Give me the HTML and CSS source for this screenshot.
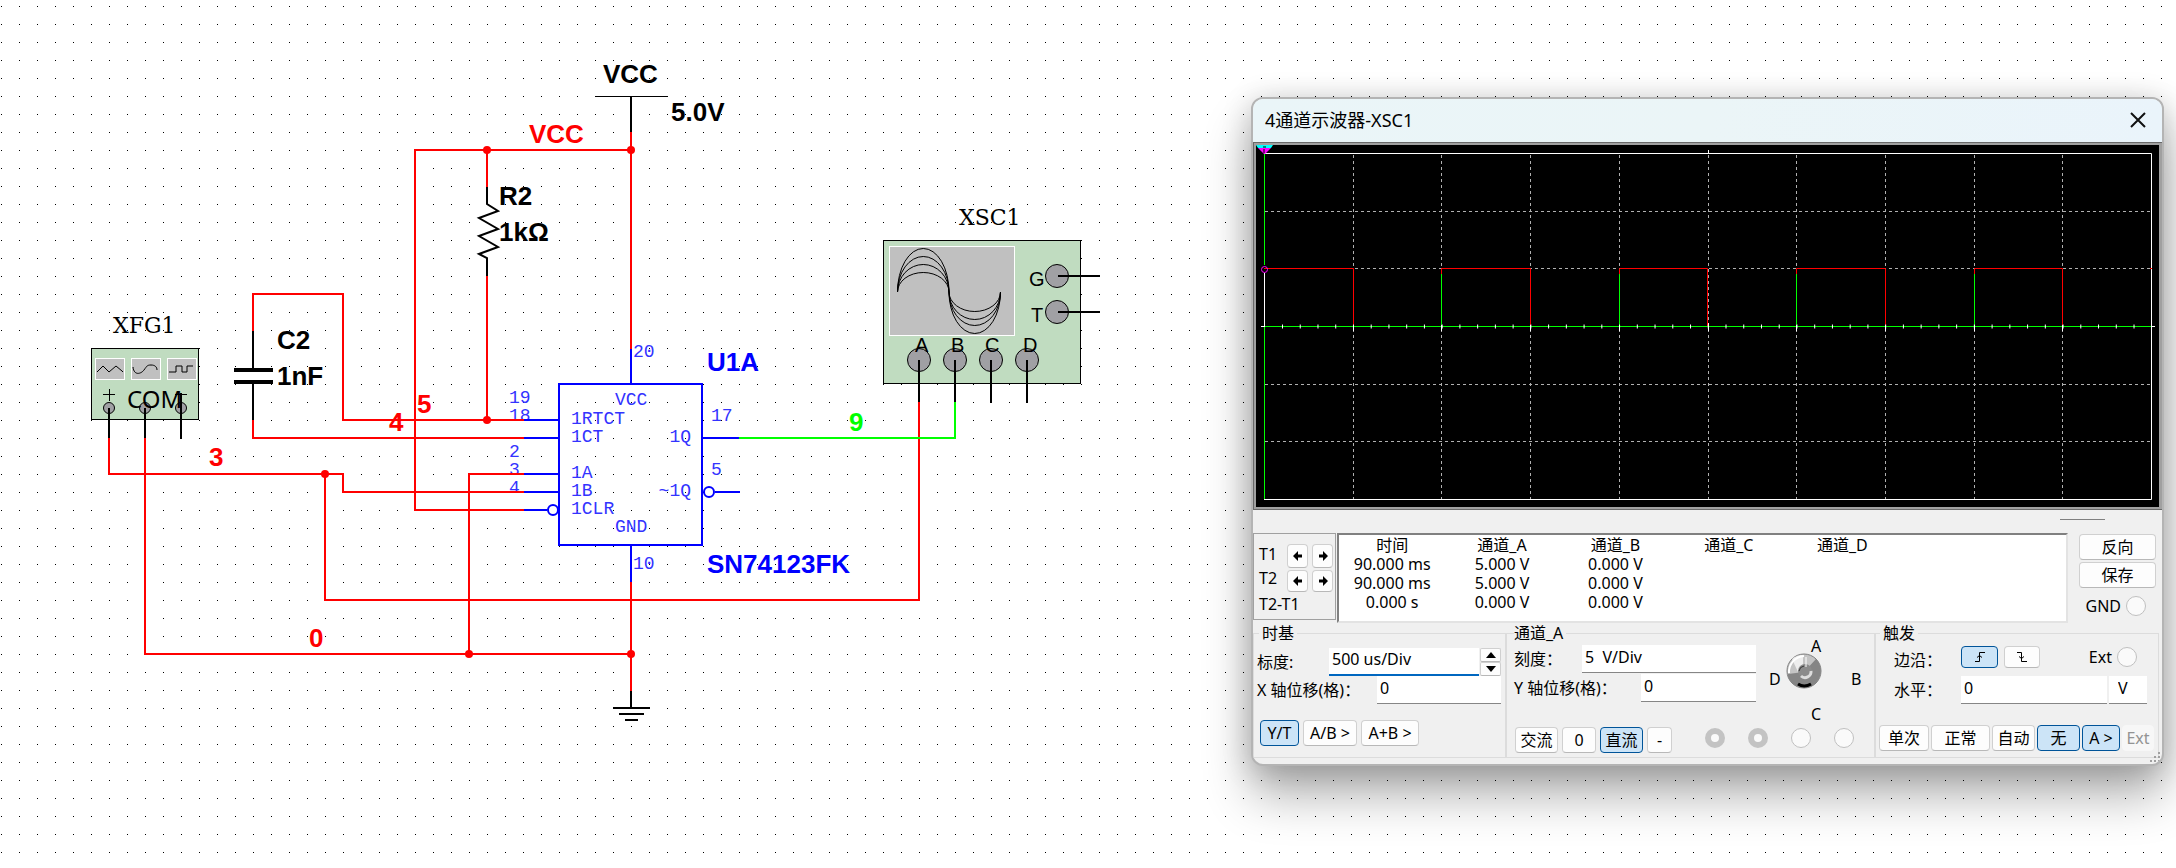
FILE: index.html
```html
<!DOCTYPE html>
<html lang="zh-CN">
<head>
<meta charset="utf-8">
<title>4通道示波器-XSC1</title>
<link rel="stylesheet" href="styles.css">
</head>
<body>
<main class="workspace">
<svg class="schematic" width="1200" height="800" viewBox="0 0 1200 800" role="img" aria-label="SN74123FK circuit">
  <g class="device">
    <rect x="91.5" y="348.5" width="107" height="71"/>
    <rect x="883.500" y="240.5" width="197" height="143"/>
  </g>
  <g class="screen">
    <rect x="95.5" y="358.5" width="29" height="21"/>
    <rect x="131.500" y="358.5" width="29" height="21"/>
    <rect x="167.5" y="358.5" width="29" height="21"/>
    <rect x="889.500" y="246.500" width="125" height="89"/>
  </g>
  <g class="thin">
    <path d="M97 372l6-6 6 6 7-6 6 5 1 1"/>
    <path d="M133 367c1 9 8 7 11 3s3-5 7-5 6 2 6 5"/>
    <path d="M169 372h7v-6h6v6h5v-6h6"/>
    <path d="M103 394.500h12M109.500 389v12M175 394.500h12"/>
    <path d="M897.500 292A25.750 43.500 0 0 1 949 292A25.750 41.500 0 0 0 1000.500 292"/>
    <path d="M897.500 292A25.750 35.500 0 0 1 949 292A25.750 33.500 0 0 0 1000.500 292"/>
    <path d="M897.500 292A25.750 27.500 0 0 1 949 292A25.750 27.500 0 0 0 1000.500 292"/>
    <path d="M897.500 292A25.750 19.500 0 0 1 949 292A25.750 19.500 0 0 0 1000.500 292"/>
  </g>
  <g class="terminal">
    <circle cx="109" cy="408" r="5.500"/><circle cx="145" cy="408" r="5.500"/><circle cx="181" cy="408" r="5.500"/>
    <circle cx="919" cy="360" r="11.500"/><circle cx="955" cy="360" r="11.500"/><circle cx="991" cy="360" r="11.500"/><circle cx="1027" cy="360" r="11.500"/>
    <circle cx="1057" cy="276" r="11.500"/><circle cx="1057" cy="312" r="11.500"/>
  </g>
  <g class="pin-no">
    <text x="633" y="357">20</text><text x="509" y="403">19</text><text x="509" y="421">18</text>
    <text x="509" y="457">2</text><text x="509" y="475">3</text><text x="509" y="493">4</text>
    <text x="711" y="421">17</text><text x="711" y="475">5</text><text x="633" y="569">10</text>
    <text x="615" y="405">VCC</text><text x="571" y="424">1RTCT</text><text x="571" y="442">1CT</text>
    <text x="571" y="478">1A</text><text x="571" y="496">1B</text><text x="571" y="514">1CLR</text>
    <text x="615" y="532">GND</text>
    <text x="691" y="442" text-anchor="end">1Q</text><text x="691" y="496" text-anchor="end">~1Q</text>
  </g>
  <g class="wire red">
    <path d="M631 132V349M631 150H415V510H524M487 150V187M487 276V420"/>
    <path d="M253 331V294H343V420H524M253 420V438H524"/>
    <path d="M109 438V474H343V492H524M325 474V600H919V402"/>
    <path d="M145 438V654H631M469 654V474H524M631 582V691"/>
  </g>
  <path class="wire green" d="M739 438H955V402"/>
  <g class="wire blue">
    <rect x="559" y="384" width="143" height="161"/>
    <path d="M631 349V384M631 545V582M524 420H559M524 438H559M524 474H559M524 492H559M524 510H547M703 438H739M715 492H740"/>
    <circle cx="553" cy="510" r="5"/><circle cx="709" cy="492" r="5"/>
  </g>
  <g class="wire black">
    <path d="M631 97V132M487 187V204L498 211L479 218L498 229L479 236L498 247L479 254L487 258V276"/>
    <path d="M253 331V369M253 383V420M109 408V438M145 408V438M181 393V439"/>
    <path d="M919 360V402M955 360V402M991 360V403M1027 360V403M1058 276H1100M1058 312H1100"/>
    <path d="M631 691V708M613 708H650M619 714H644M625 720H638"/>
  </g>
  <path class="rail" d="M595 96.500H668"/>
  <path class="plate" d="M234 370H273M234 382H273"/>
  <g class="joint">
    <circle cx="487" cy="150" r="4"/><circle cx="631" cy="150" r="4"/><circle cx="487" cy="420" r="4"/>
    <circle cx="325" cy="474" r="4"/><circle cx="469" cy="654" r="4"/><circle cx="631" cy="654" r="4"/>
  </g>
  <g class="label">
    <text x="603" y="83">VCC</text><text x="671" y="121">5.0V</text>
    <text x="499" y="205">R2</text><text x="499" y="241">1kΩ</text>
    <text x="277" y="349">C2</text><text x="277" y="385">1nF</text>
  </g>
  <g class="label net">
    <text x="529" y="143">VCC</text><text x="209" y="466">3</text><text x="389" y="431">4</text>
    <text x="417" y="413">5</text><text x="309" y="647">0</text>
  </g>
  <text class="label out" x="849" y="431">9</text>
  <g class="label part"><text x="707" y="371">U1A</text><text x="707" y="573">SN74123FK</text></g>
  <g class="instrument"><text x="113" y="333">XFG1</text><text x="959" y="225">XSC1</text></g>
  <text class="com" x="127" y="408">COM</text>
  <g class="port">
    <text x="1029" y="286">G</text><text x="1031" y="322">T</text>
    <text x="915" y="352">A</text><text x="951" y="352">B</text><text x="985" y="352">C</text><text x="1023" y="352">D</text>
  </g>
</svg>

<section class="window" aria-label="4通道示波器-XSC1">
  <header class="titlebar">
    <h1 class="title">4通道示波器-XSC1</h1>
    <button class="close" aria-label="关闭"><svg width="16" height="16" viewBox="0 0 16 16"><path d="M1 1L15 15M15 1L1 15"/></svg></button>
  </header>

  <div class="plot-frame">
    <svg class="plot" viewBox="0 0 903 362" preserveAspectRatio="none" role="img" aria-label="波形">
      <path class="grid-v" d="M97.500 10V354M185.500 10V354M274.500 10V354M363.500 10V354M452.500 10V354M540.500 10V354M629.500 10V354M718.500 10V354M806.500 10V354"/>
      <path class="grid-h" d="M9 66.500H895M9 123.500H895M9 239.500H895M9 296.500H895"/>
      <path class="frame" d="M8 8.500H895.500V354.500H8M452.500 5V9M5 181.500H9M895 181.500H899"/>
      <path class="trace-a" d="M8 123.500H97.500V181M185.500 181V123.500H274.500V181M363.500 181V123.500H451.500V181M540.500 181V123.500H629.500V181M718.500 181V123.500H806.500V181M894 123.500H896"/>
      <path class="trace-b" d="M8.500 8V120M8.500 181V354M8 181.500H895M185.500 129V181M363.500 129V181M540.500 129V181M718.500 129V181"/>
      <path class="frame" d="M8.500 128V182"/>
      <path class="ticks" d="M26 181.500H896"/>
      <path class="frame" d="M97.500 180V186M185.500 180V186M274.500 180V186M363.500 180V186M452.500 178V186M540.500 180V186M629.500 180V186M718.500 180V186M806.500 180V186"/>
      <path class="cursor-1" d="M0 0H17L15 3H2Z"/>
      <path class="cursor-2" d="M2 3H15L9 9H8Z"/>
      <path class="cursor-3" d="M7 2h3M7 5h2M7 7h2"/>
      <circle class="cursor-ring" cx="8.500" cy="124.500" r="3"/>
    </svg>
  </div>

  <div class="splitter"><span class="grip"></span></div>

  <div class="readings">
    <div class="cursors">
      <span>T1</span><button class="btn" aria-label="T1 左移"><svg width="10" height="10" viewBox="0 0 10 10"><path d="M0 5L5 0V3.500H9V6.500H5V10Z"/></svg></button><button class="btn" aria-label="T1 右移"><svg width="10" height="10" viewBox="0 0 10 10"><path d="M10 5L5 0V3.500H1V6.500H5V10Z"/></svg></button>
      <span class="second">T2</span><button class="btn" aria-label="T2 左移"><svg width="10" height="10" viewBox="0 0 10 10"><path d="M0 5L5 0V3.500H9V6.500H5V10Z"/></svg></button><button class="btn" aria-label="T2 右移"><svg width="10" height="10" viewBox="0 0 10 10"><path d="M10 5L5 0V3.500H1V6.500H5V10Z"/></svg></button>
      <span class="delta">T2-T1</span>
    </div>
    <div class="values">
      <table>
        <thead><tr><th>时间</th><th>通道_A</th><th>通道_B</th><th>通道_C</th><th>通道_D</th></tr></thead>
        <tbody>
          <tr><td>90.000 ms</td><td>5.000 V</td><td>0.000 V</td><td></td><td></td></tr>
          <tr><td>90.000 ms</td><td>5.000 V</td><td>0.000 V</td><td></td><td></td></tr>
          <tr><td>0.000 s</td><td>0.000 V</td><td>0.000 V</td><td></td><td></td></tr>
        </tbody>
      </table>
    </div>
    <div class="side">
      <button class="btn">反向</button>
      <button class="btn">保存</button>
      <label class="radio-label">GND<input class="radio" type="radio" name="gnd"></label>
    </div>
  </div>

  <div class="groups">
    <fieldset class="group timebase">
      <legend>时基</legend>
      <div class="row"><label for="scale">标度:</label><input class="field active" id="scale" value="500 us/Div">
        <span class="spin"><button class="btn" aria-label="增加"><svg width="10" height="6" viewBox="0 0 10 6"><path d="M0 6L5 0L10 6Z"/></svg></button><button class="btn" aria-label="减少"><svg width="10" height="6" viewBox="0 0 10 6"><path d="M0 0L5 6L10 0Z"/></svg></button></span></div>
      <div class="row"><label for="xpos">X 轴位移(格)：</label><input class="field short" id="xpos" value="0"></div>
      <div class="buttons"><button class="btn on w39">Y/T</button><button class="btn w54">A/B &gt;</button><button class="btn w58">A+B &gt;</button></div>
    </fieldset>

    <fieldset class="group channel">
      <legend>通道_A</legend>
      <div class="channel-main">
        <div class="row"><label for="vscale">刻度：</label><input class="field wide" id="vscale" value="5  V/Div"></div>
        <div class="row"><label for="ypos">Y 轴位移(格)：</label><input class="field mid" id="ypos" value="0"></div>
        <div class="buttons"><button class="btn w43">交流</button><button class="btn w34">0</button><button class="btn on w43">直流</button><button class="btn w25">-</button></div>
      </div>
      <div class="channel-pick">
        <svg class="dial" width="96" height="96" viewBox="0 -6 96 96" role="img" aria-label="通道选择">
          <circle cx="36" cy="33" r="17" fill="#c4c4c4" stroke="#808080"/>
          <path d="M20 36L36 34L48 21A17 17 0 1 1 20 39Z" fill="#858585"/>
          <path d="M24 21A17 17 0 0 1 35 17V30L30 34Z" fill="#eee"/>
          <path d="M21 35A16 16 0 0 1 36 18" fill="none" stroke="#fff" stroke-width="2"/>
          <circle cx="37" cy="33" r="7" fill="#8b8b8b"/>
          <path d="M43 33A6 6 0 0 1 33 38" fill="none" stroke="#ddd" stroke-width="3"/>
          <path d="M38 19V29" stroke="#fff"/>
          <path d="M31 33A6 6 0 0 1 36 28" fill="none" stroke="#333"/>
          <path d="M30 46Q36 50 43 46" fill="none" stroke="#000" stroke-width="3"/>
          <text x="43" y="14">A</text><text x="83" y="47">B</text><text x="43" y="82">C</text><text x="1" y="47">D</text>
        </svg>
        <div class="radios">
          <input class="radio dim" type="radio" name="ch1" aria-label="A" checked><input class="radio dim" type="radio" name="ch2" aria-label="B" checked><input class="radio" type="radio" name="ch3" aria-label="C"><input class="radio" type="radio" name="ch4" aria-label="D">
        </div>
      </div>
    </fieldset>

    <fieldset class="group trigger">
      <legend>触发</legend>
      <div class="row edge"><span class="caption">边沿：</span>
        <button class="btn on w37" aria-label="上升沿"><svg class="pulse" width="10" height="10" viewBox="0 0 10 10"><path d="M0 9.500H4.500V.5H10M2 5.500L4.500 3.500L7 5.500"/></svg></button>
        <button class="btn w36" aria-label="下降沿"><svg class="pulse" width="10" height="10" viewBox="0 0 10 10"><path d="M0 .5H4.500V9.500H10M2 4.500L4.500 6.500L7 4.500"/></svg></button>
        <label class="radio-label">Ext<input class="radio" type="radio" name="ext"></label></div>
      <div class="row level"><label class="caption" for="level">水平：</label><input class="field" id="level" value="0"><input class="field unit" aria-label="单位" value="V"></div>
      <div class="buttons tight"><button class="btn w50">单次</button><button class="btn w59">正常</button><button class="btn w43">自动</button><button class="btn on w43">无</button><button class="btn on w38">A &gt;</button><button class="btn w32" disabled>Ext</button></div>
    </fieldset>
  </div>
  <svg class="resize" width="12" height="12" viewBox="0 0 12 12"><path d="M8 0h2v2h-2zM4 4h2v2h-2zM8 4h2v2h-2zM0 8h2v2h-2zM4 8h2v2h-2zM8 8h2v2h-2z"/></svg>
</section>
</main>
</body>
</html>
```
FILE: styles.css
```css
* { box-sizing: border-box; }

body {
  margin: 0;
  font: 16px/20px "Noto Sans", "Noto Sans CJK SC", sans-serif;
  color: #000;
}

.workspace {
  position: relative;
  min-height: 100vh;
  overflow: hidden;
  background: #fff conic-gradient(from 270deg at 1px 1px, #000 90deg, transparent 0) 1px 6px / 18px 18px;
}

.schematic { display: block; }
.device rect { fill: #c0dcc0; stroke: #000; }
.screen rect { fill: #c0c0c0; stroke: #fff; }
.thin path { fill: none; stroke: #000; }
.terminal circle { fill: #a0a0a4; stroke: #000; }
.wire { fill: none; stroke-width: 2; }
.red { stroke: #f00; }
.green { stroke: #0f0; }
.blue { stroke: #00f; }
.blue circle { fill: #fff; }
.black { stroke: #000; }
.rail { stroke: #000; }
.plate { stroke: #000; stroke-width: 4; }
.joint { fill: #f00; }
.label { font: bold 26px "Liberation Sans", sans-serif; }
.net { fill: #f00; }
.out { fill: #0f0; }
.part { fill: #00f; }
.instrument { font: 22px "DejaVu Serif", serif; }
.pin-no { font: 18px "Liberation Mono", monospace; fill: #33f; }
.com { font-size: 24px; }
.port { font: 20px "Liberation Sans", sans-serif; }

.window {
  position: absolute;
  top: 97px;
  left: 1251px;
  right: 12px;
  min-width: 913px;
  border: 2px solid #b4b4b4;
  border-radius: 12px;
  background: #f0f0f0;
  box-shadow: 0 30px 48px rgba(0, 0, 0, .3), 0 4px 30px rgba(0, 0, 0, .2);
  overflow: hidden;
  padding-bottom: 6px;
}

.titlebar {
  display: flex;
  align-items: center;
  justify-content: space-between;
  height: 43px;
  padding: 0 16px 2px 12px;
  background: linear-gradient(90deg, #eaf5f8, #ebf5f7 50%, #eaf4fb);
}
.title { margin: 0; font-size: 18px; font-weight: 400; }
.close { display: flex; padding: 0; border: 0; background: none; }
.close path { stroke: #111; stroke-width: 2; fill: none; }

.plot-frame {
  padding: 2px 3px 2px 2px;
  background: #a0a0a0;
  border: 1px solid #696969;
  border-right: 0;
}
.plot { display: block; width: 100%; height: 362px; background: #000; }
.plot path { fill: none; stroke-width: 1; }
.grid-v, .grid-h { stroke: #b0b0b0; stroke-dasharray: 3 3; }
.frame { stroke: #fff; }
.trace-a { stroke: #f00; }
.trace-b { stroke: #0f0; }
.plot .ticks { stroke: #fff; stroke-width: 4; stroke-dasharray: 1 16.740; }
.plot .cursor-1 { fill: #0ff; }
.plot .cursor-2 { fill: #f0f; }
.cursor-3 { stroke: #000; }
.cursor-ring { fill: none; stroke: #f0f; }

.splitter { display: flex; justify-content: flex-end; height: 23px; padding: 9px 57px 0 0; }
.grip { width: 45px; height: 1px; background: #808080; }

.readings { display: flex; height: 90px; }

.cursors {
  display: grid;
  grid-template-columns: 24px 21px 21px;
  grid-template-rows: 24px 22px 20px;
  column-gap: 4px;
  row-gap: 2px;
  align-self: flex-start;
  width: 83px;
  height: 87px;
  padding: 10px 0 0 5px;
  border: 1px solid #a0a0a0;
}
.second { line-height: 16px; }
.delta { grid-column: 1 / -1; }

.values {
  flex: 1;
  margin: 0 11px 0 1px;
  border: 2px solid #e3e3e3;
  border-top-color: #808080;
  border-left-color: #808080;
  background: #fff;
}
.values table { border-collapse: collapse; table-layout: fixed; width: 560px; margin-top: 1px; }
.values th, .values td { width: 112px; padding: 0; font-weight: 400; line-height: 19px; height: 19px; text-align: center; }
.values th:first-child { width: 105px; }

.side { display: flex; flex-direction: column; gap: 2px; width: 77px; margin-right: 6px; padding-top: 1px; }
.side .btn { height: 26px; }
.radio-label { display: flex; align-items: center; gap: 5px; }
.side .radio-label { align-self: flex-end; margin: 6px 10px 0 0; }

.btn {
  display: flex;
  align-items: center;
  justify-content: center;
  padding: 0;
  border: 1px solid #d0d0d0;
  border-bottom-color: #b8b8b8;
  border-radius: 4px;
  background: #fdfdfd;
  color: #000;
  font: inherit;
  white-space: nowrap;
}
.btn.on { border-color: #005499; background: #cce4f7; }
.btn:disabled { border-color: #f7f7f7; background: #f7f7f7; color: #939393; }

.pulse path { fill: none; stroke: #000; }

.radio {
  appearance: none;
  width: 20px;
  height: 20px;
  margin: 0;
  border: 1px solid #c0c0c0;
  border-radius: 50%;
  background: #fafafa;
}
.dim { border: 6px solid #c3c3c3; }

.groups {
  display: grid;
  grid-template-columns: 253fr 369fr 284fr;
  padding-right: 3px;
}
.group {
  min-width: 0;
  min-height: 135px;
  margin: 0;
  padding: 0;
  border: 1px solid #dcdcdc;
}
.group legend { margin-left: 5px; padding: 0 3px; line-height: 20px; }

.row { display: flex; align-items: center; justify-content: space-between; white-space: nowrap; }
.field {
  height: 28px;
  padding: 0 3px 4px;
  border: 0;
  border-bottom: 1px solid #868686;
  background: #fff;
  font: inherit;
  color: #000;
  min-width: 0;
  outline: 0;
}

.timebase .row { width: 244px; margin-left: 3px; }
.timebase .row:first-of-type { margin-top: 5px; }
.active { width: 150px; margin-left: auto; border-bottom: 2px solid #0067c0; }
.short { width: 124px; }
.wide { width: 174px; }
.mid { width: 115px; }
.spin { display: flex; flex-direction: column; margin-left: 1px; }
.spin .btn { width: 21px; height: 14px; border-radius: 2px; }

.buttons { display: flex; gap: 4px; }
.buttons .btn { height: 26px; }
.timebase .buttons { margin: 16px 0 0 6px; }

.channel { padding-left: 7px; }
.channel legend { margin-left: 0; padding-left: 0; }
.channel-main { float: left; width: 242px; }
.channel .row:first-child { margin-top: 2px; }
.channel .row + .row { margin-top: 1px; }
.channel .buttons { margin: 25px 0 0 1px; }
.channel-pick { float: left; margin: -11px 0 0 12px; }
.dial { display: block; }
.radios { display: flex; gap: 23px; margin: 0 0 0 -63px; }

.trigger legend { margin-left: 4px; }
.trigger .row { margin-left: 18px; }
.edge { margin-top: 3px; }
.edge .btn { height: 22px; margin-right: 6px; }
.edge .radio-label { margin: 0 21px 0 auto; }
.caption { flex: 0 0 67px; }
.edge .caption { align-self: flex-end; line-height: 16px; }
.level { margin-top: 8px; padding-right: 11px; }
.level .field { flex: 1; }
.level .unit { flex: 0 0 38px; margin-left: 2px; padding-left: 9px; }
.tight { gap: 2px; margin: 21px 0 0 3px; }

.w25 { width: 25px; }
.w32 { width: 32px; }
.w34 { width: 34px; }
.w36 { width: 36px; }
.w37 { width: 37px; }
.w38 { width: 38px; }
.w39 { width: 39px; }
.w43 { width: 43px; }
.w50 { width: 50px; }
.w54 { width: 54px; }
.w58 { width: 58px; }
.w59 { width: 59px; }

.resize { position: absolute; right: 0; bottom: 0; fill: #a0a0a0; }
```
